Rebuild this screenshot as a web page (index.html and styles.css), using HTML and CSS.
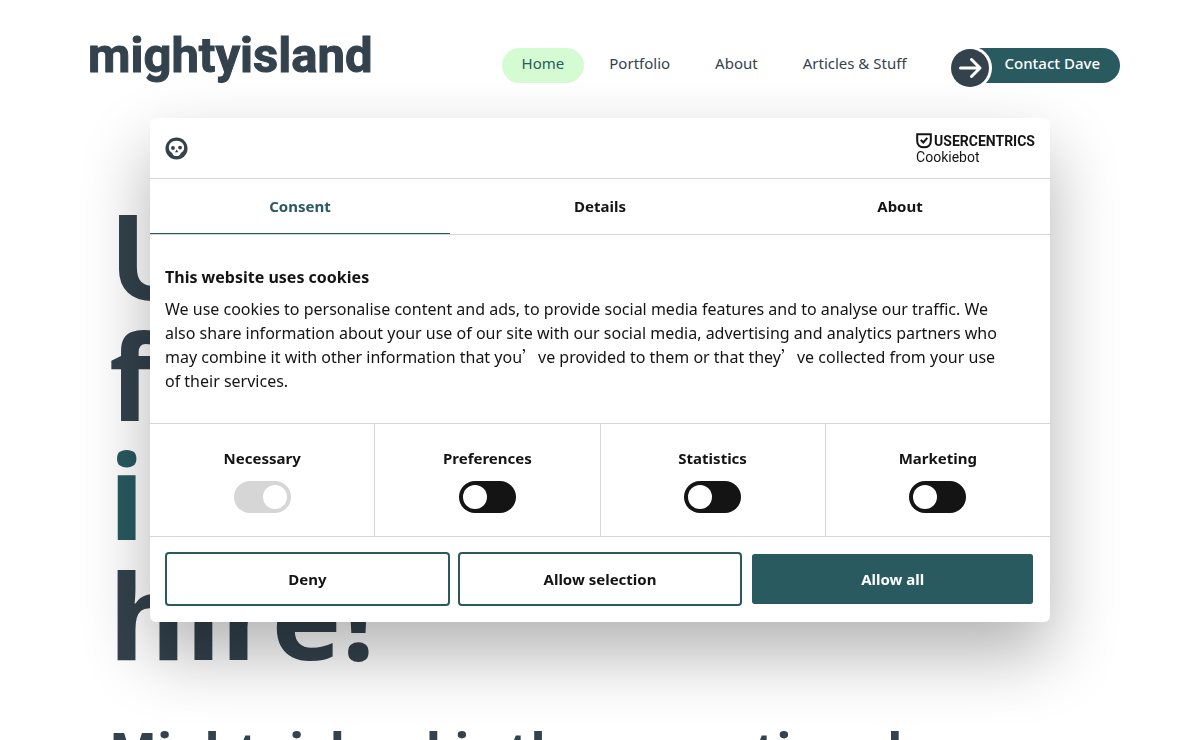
FILE: index.html
```html
<!DOCTYPE html>
<html lang="en">
<head>
<meta charset="utf-8">
<title>Mightyisland</title>
<link rel="stylesheet" href="styles.css">
</head>
<body>
<header class="site-header">
  <a class="logo" href="#">mightyisland</a>
  <nav class="nav" aria-label="Main">
    <a class="nav-link nav-link-active" href="#">Home</a>
    <a class="nav-link" href="#">Portfolio</a>
    <a class="nav-link" href="#">About</a>
    <a class="nav-link" href="#">Articles &amp; Stuff</a>
  </nav>
  <a class="contact" href="#">
    <svg class="contact-icon" viewBox="0 0 44 44" aria-hidden="true">
      <circle cx="22" cy="22" r="22" fill="#fff"/>
      <circle cx="22" cy="22" r="19" fill="#33424d"/>
      <path d="M12.500 22H32M23.500 13.500L32 22L23.500 30.500" fill="none" stroke="#fff" stroke-width="3" stroke-linecap="round" stroke-linejoin="round"/>
    </svg>
    <span class="contact-label">Contact Dave</span>
  </a>
</header>
<main class="hero">
  <h1 class="hero-title">UX<br>for<br><span class="accent">indie</span><br>hire!</h1>
  <h2 class="hero-sub">Mightyisland is the operational</h2>
</main>

<section class="dialog" role="dialog" aria-label="Cookie consent">
  <header class="dialog-header">
    <svg class="skull" viewBox="0 0 24 24" aria-hidden="true">
      <circle cx="12" cy="12" r="11.500" fill="#33424d"/>
      <path d="M12 4C7 4 4 7.300 4 11.300C4 14 5.500 15.800 7.500 16.600C8 18.800 9.300 19.800 12 19.800S16 18.800 16.500 16.600C18.500 15.800 20 14 20 11.300C20 7.300 17 4 12 4Z" fill="#fff"/>
      <circle cx="8.300" cy="11.500" r="2" fill="#33424d"/>
      <circle cx="15.700" cy="11" r="2" fill="#33424d"/>
      <path d="M12.200 13L14 16H10.400Z" fill="#33424d"/>
    </svg>
    <a class="brand" href="#">
      <span class="brand-top">
        <svg class="shield" viewBox="0 0 16 16" aria-hidden="true">
          <path d="M1.200 1.200H14.800V8C14.800 12 12 14.300 8 14.300S1.200 12 1.200 8Z" fill="none" stroke="#141414" stroke-width="2"/>
          <path d="M4.800 7L7.300 9.500L11.300 4.800" fill="none" stroke="#141414" stroke-width="2"/>
        </svg>
        <span>USERCENTRICS</span>
      </span>
      <span class="brand-sub">Cookiebot</span>
    </a>
  </header>
  <div class="tabs" role="tablist">
    <button class="tab tab-active" role="tab" aria-selected="true">Consent</button>
    <button class="tab" role="tab" aria-selected="false">Details</button>
    <button class="tab" role="tab" aria-selected="false">About</button>
  </div>
  <div class="copy">
    <h2 class="copy-title">This website uses cookies</h2>
    <p class="copy-text">We use cookies to personalise content and ads, to provide social media features and to analyse our traffic. We<br>also share information about your use of our site with our social media, advertising and analytics partners who<br>may combine it with other information that you<span class="quote">’</span>ve provided to them or that they<span class="quote">’</span>ve collected from your use<br>of their services.</p>
  </div>
  <div class="options">
    <label class="option"><span>Necessary</span><input class="switch" type="checkbox" role="switch" checked disabled></label>
    <label class="option"><span>Preferences</span><input class="switch" type="checkbox" role="switch"></label>
    <label class="option"><span>Statistics</span><input class="switch" type="checkbox" role="switch"></label>
    <label class="option"><span>Marketing</span><input class="switch" type="checkbox" role="switch"></label>
  </div>
  <footer class="actions">
    <button class="btn">Deny</button>
    <button class="btn">Allow selection</button>
    <button class="btn btn-primary">Allow all</button>
  </footer>
</section>
</body>
</html>
```
FILE: styles.css
```css
* { box-sizing: border-box; }
html { overflow: hidden; }
body {
  margin: 0;
  background: #fff;
  color: #33424d;
  font-family: "Noto Sans", "Open Sans", sans-serif;
  font-size: 15px;
}
a { color: inherit; text-decoration: none; }
h1, h2, p { margin: 0; }

.site-header {
  display: flex;
  align-items: flex-start;
  padding: 24px 80px 0 88px;
  height: 118px;
}
.logo {
  margin-right: auto;
  font-family: Roboto, sans-serif;
  font-size: 49px;
  font-weight: 700;
  line-height: 64px;
  -webkit-text-stroke: 1px #33424d;
}
.nav { display: flex; gap: 5px; margin: 24px 21px 0 0; }
.nav-link { padding: 0 20px 5px; border-radius: 18px; line-height: 30px; }
.nav-link-active { background: #d5fbd2; color: #285a60; }
.contact { position: relative; margin-top: 24px; padding: 0 20px 5px 57px; line-height: 30px; color: #fff; }
.contact::before {
  content: "";
  position: absolute;
  inset: 0 0 0 24px;
  border-radius: 0 18px 18px 0;
  background: #285a60;
}
.contact-icon { position: absolute; left: 0; top: -2px; width: 44px; height: 44px; }
.contact-label { position: relative; font-weight: 500; }

.hero { padding: 77px 109px 0; }
.hero-title { font-size: 118px; line-height: 120px; font-weight: 700; }
.accent { color: #285a60; }
.hero-sub { margin-top: 42px; font-size: 51px; line-height: 64px; white-space: nowrap; }

.dialog {
  position: fixed;
  top: 50%;
  left: 50%;
  transform: translate(-50%, -50%);
  width: 75%;
  border-radius: 6px;
  background: #fff;
  color: #141414;
  font-size: 15px;
  box-shadow: 0 32px 68px rgba(0, 0, 0, 0.3);
}
.dialog-header {
  display: flex;
  align-items: center;
  justify-content: space-between;
  height: 61px;
  padding: 0 15px;
  border-bottom: 1px solid #d6d6d6;
}
.skull { width: 23px; height: 23px; }
.brand { display: flex; flex-direction: column; padding-top: 2px; font-family: Roboto, sans-serif; }
.brand-top { display: flex; align-items: center; gap: 2px; font-size: 14px; line-height: 16px; font-weight: 700; }
.shield { width: 16px; height: 16px; }
.brand-sub { font-size: 14px; line-height: 16px; }

.tabs { display: flex; border-bottom: 1px solid #d6d6d6; }
.tab {
  flex: 1;
  height: 55px;
  padding: 0 0 1px;
  border: 0;
  background: none;
  color: inherit;
  font: inherit;
  font-weight: 700;
}
.tab-active { color: #285a60; box-shadow: inset 0 -1px #285a60; }

.copy { padding: 30px 15px; }
.copy-title { font-size: 16px; line-height: 24px; }
.copy-text { margin-top: 8px; font-size: 16px; line-height: 24px; }
.quote { font-family: "Noto Sans CJK SC", sans-serif; line-height: 1; }

.options { display: flex; border-top: 1px solid #d6d6d6; border-bottom: 1px solid #d6d6d6; }
.option {
  flex: 1;
  display: flex;
  flex-direction: column;
  align-items: center;
  gap: 12px;
  padding: 23px 0;
  border-right: 1px solid #d6d6d6;
  line-height: 22px;
  font-weight: 700;
}
.option:last-child { border-right: 0; }
.switch {
  appearance: none;
  display: flex;
  width: 57px;
  height: 32px;
  margin: 0;
  padding: 4px;
  border-radius: 16px;
  background: #141414;
}
.switch::before { content: ""; width: 24px; height: 24px; border-radius: 50%; background: #fff; }
.switch:checked { justify-content: flex-end; }
.switch:disabled { background: #d6d6d6; }

.actions { display: flex; gap: 8px; padding: 15px 15px 16px; }
.btn {
  flex: 1;
  height: 54px;
  padding: 0;
  border: 2px solid #285a60;
  border-radius: 4px;
  background: #fff;
  color: #141414;
  font: inherit;
  font-weight: 700;
}
.btn-primary { border-color: #fff; background: #285a60; background-clip: padding-box; color: #fff; }
```
